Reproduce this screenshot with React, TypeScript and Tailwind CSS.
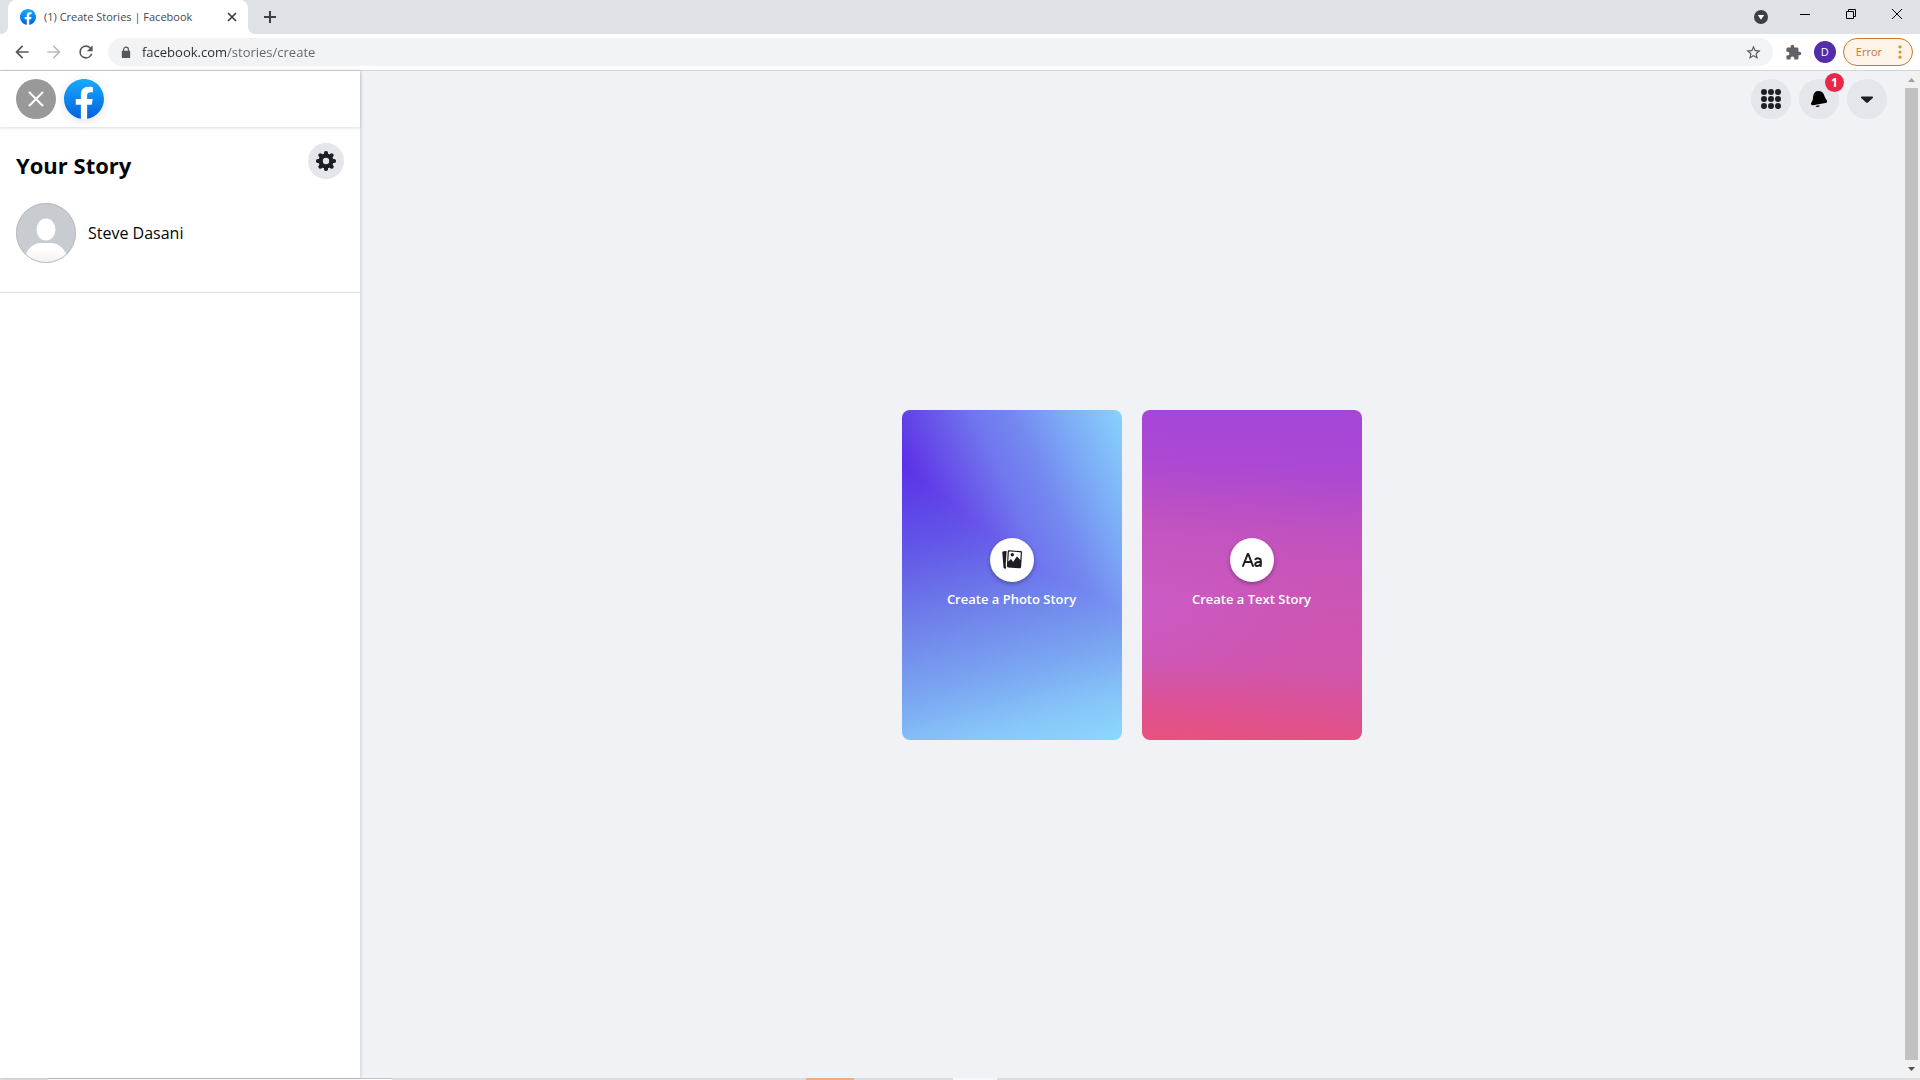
import type { ReactNode } from "react";

function FacebookMark({ id, className }: { id: string; className: string }) {
  return (
    <svg viewBox="0 0 24 24" className={className} aria-hidden="true">
      <defs>
        <linearGradient id={id} x1="0" y1="0" x2="0" y2="1">
          <stop offset="0" stopColor="#1aaafc" />
          <stop offset="1" stopColor="#0062e0" />
        </linearGradient>
      </defs>
      <circle cx="12" cy="12" r="11.5" fill="#fff" />
      <path
        fill={`url(#${id})`}
        d="M24 12c0-6.627-5.373-12-12-12S0 5.373 0 12c0 5.99 4.388 10.954 10.125 11.854v-8.385H7.078v-3.47h3.047V9.357c0-3.007 1.792-4.669 4.533-4.669 1.312 0 2.686.235 2.686.235v2.953H15.83c-1.491 0-1.956.925-1.956 1.874v2.25h3.328l-.532 3.47h-2.796v8.385C19.612 22.954 24 17.99 24 12z"
      />
    </svg>
  );
}

function TabStrip() {
  return (
    <div className="flex h-[34px] shrink-0 items-stretch bg-[#dee1e6]">
      <div className="mt-auto size-2 bg-[radial-gradient(circle_at_0_0,#dee1e6_8px,#fff_8px)]" />
      <div className="flex w-60 items-center rounded-t-lg bg-white pr-2 pl-3">
        <FacebookMark id="tabMark" className="size-4" />
        <span className="ml-2 flex-1 truncate text-[11px] text-[#45494d]">(1) Create Stories | Facebook</span>
        <button aria-label="Close tab" className="grid size-4 place-items-center text-[#3c4043]">
          <svg viewBox="0 0 16 16" className="size-4" stroke="currentColor" strokeWidth="1.7" aria-hidden="true">
            <path d="M4 4l8 8M12 4l-8 8" />
          </svg>
        </button>
      </div>
      <div className="mt-auto size-2 bg-[radial-gradient(circle_at_8px_0,#dee1e6_8px,#fff_8px)]" />
      <button aria-label="New tab" className="grid w-7 place-items-center text-[#3c4043]">
        <svg viewBox="0 0 16 16" className="size-4" stroke="currentColor" strokeWidth="2" aria-hidden="true">
          <path d="M8 2v12M2 8h12" />
        </svg>
      </button>
      <div className="ml-auto flex items-start">
        <button aria-label="Search tabs" className="mt-2.5 mr-3.5 grid size-[14px] place-items-center rounded-full bg-[#3c4043]">
          <svg viewBox="0 0 14 14" className="size-[14px]" aria-hidden="true">
            <path d="M3.8 5h6.4L7 9.8z" fill="#fff" />
          </svg>
        </button>
        <button aria-label="Minimize" className="grid h-7 w-[46px] place-items-center">
          <svg viewBox="0 0 12 12" className="size-3" stroke="#000" aria-hidden="true">
            <path d="M1 6.5h10" />
          </svg>
        </button>
        <button aria-label="Restore" className="grid h-7 w-[46px] place-items-center">
          <svg viewBox="0 0 12 12" className="size-3" stroke="#000" fill="none" aria-hidden="true">
            <path d="M1.5 3.5h7v7h-7zM3.5 3.5v-2h7v7h-2" />
          </svg>
        </button>
        <button aria-label="Close window" className="grid h-7 w-[46px] place-items-center">
          <svg viewBox="0 0 12 12" className="size-3" stroke="#000" aria-hidden="true">
            <path d="M1 1l10 10M11 1L1 11" />
          </svg>
        </button>
      </div>
    </div>
  );
}

function NavIcon({ label, children, className }: { label: string; children: ReactNode; className: string }) {
  return (
    <button aria-label={label} className="grid size-8 place-items-center">
      <svg viewBox="0 0 24 24" className={className} fill="currentColor" aria-hidden="true">
        {children}
      </svg>
    </button>
  );
}

function Toolbar() {
  return (
    <div className="flex h-[37px] shrink-0 items-center border-b border-[#d4d5d8] bg-white pr-[7px] pl-1.5">
      <NavIcon label="Back" className="size-5 text-[#55585d]">
        <path d="M20 11H7.83l5.59-5.59L12 4l-8 8 8 8 1.41-1.41L7.83 13H20z" />
      </NavIcon>
      <NavIcon label="Forward" className="size-5 text-[#babcbe]">
        <path d="M12 4l-1.41 1.41L16.17 11H4v2h12.17l-5.58 5.59L12 20l8-8z" />
      </NavIcon>
      <NavIcon label="Reload" className="size-5 text-[#55585d]">
        <path d="M17.65 6.35A7.96 7.96 0 0 0 12 4a8 8 0 1 0 7.73 10h-2.08A6 6 0 1 1 12 6c1.66 0 3.14.69 4.22 1.78L13 11h7V4z" />
      </NavIcon>
      <div className="ml-1.5 flex h-7 flex-1 items-center rounded-full bg-[#f1f3f4] pr-[11px] pl-3">
        <svg viewBox="0 0 12 14" className="h-[13px] w-3" aria-hidden="true">
          <path d="M3.4 6V3.8a2.6 2.6 0 0 1 5.2 0V6" fill="none" stroke="#55585d" strokeWidth="1.3" />
          <rect x="1.5" y="5" width="9" height="8" rx="1" fill="#55585d" />
        </svg>
        <input
          aria-label="Address"
          defaultValue="facebook.com/stories/create"
          className="ml-2.5 flex-1 bg-[linear-gradient(90deg,#27292c_85px,#606468_85px)] bg-clip-text text-[13px] leading-5 text-transparent outline-none"
        />
        <button aria-label="Bookmark this tab">
          <svg viewBox="0 0 24 24" className="size-[17px]" fill="#55585d" aria-hidden="true">
            <path d="M22 9.24l-7.19-.62L12 2 9.19 8.63 2 9.24l5.46 4.73L5.82 21 12 17.27 18.18 21l-1.63-7.03zM12 15.4l-3.76 2.27 1-4.28-3.32-2.88 4.38-.38L12 6.1l1.71 4.04 4.38.38-3.32 2.88 1 4.28z" />
          </svg>
        </button>
      </div>
      <button aria-label="Extensions" className="ml-3">
        <svg viewBox="0 0 24 24" className="size-[17px]" fill="#5f6368" aria-hidden="true">
          <path d="M20.5 11H19V7a2 2 0 0 0-2-2h-4V3.5a2.5 2.5 0 0 0-5 0V5H4a2 2 0 0 0-2 2v3.8h1.5a2.7 2.7 0 0 1 0 5.4H2V20a2 2 0 0 0 2 2h3.8v-1.5a2.7 2.7 0 0 1 5.4 0V22H17a2 2 0 0 0 2-2v-4h1.5a2.5 2.5 0 0 0 0-5z" />
        </svg>
      </button>
      <button aria-label="Profile D" className="ml-3 grid size-[22px] place-items-center rounded-full bg-[#512da8] text-[11px] text-white">
        D
      </button>
      <button className="ml-[7px] flex h-7 items-center rounded-full border border-[#c77a2c] bg-[#fdf3e8] pr-2.5 pl-3 text-[11px] text-[#c5782a]">
        <span>Error</span>
        <svg viewBox="0 0 4 16" className="ml-4 h-4 w-1" fill="#d9942b" aria-hidden="true">
          <circle cx="2" cy="2.8" r="1.6" />
          <circle cx="2" cy="8" r="1.6" />
          <circle cx="2" cy="13.2" r="1.6" />
        </svg>
      </button>
    </div>
  );
}

function Sidebar() {
  return (
    <aside className="z-10 w-[360px] shrink-0 bg-white shadow-[1px_0_3px_rgba(0,0,0,0.14)]">
      <div className="flex h-14 items-center gap-2 px-4 shadow-[0_1px_3px_rgba(0,0,0,0.14)]">
        <button aria-label="Close" className="grid size-10 place-items-center rounded-full bg-[#999]">
          <svg viewBox="0 0 20 20" className="size-5" stroke="#fff" strokeWidth="2" strokeLinecap="round" aria-hidden="true">
            <path d="M3.5 3.5l13 13M16.5 3.5l-13 13" />
          </svg>
        </button>
        <a href="#home" aria-label="Facebook" className="rounded-full shadow-[0_2px_10px_rgba(0,0,0,0.12)]">
          <FacebookMark id="homeMark" className="size-10" />
        </a>
      </div>
      <div className="border-b border-[#dddfe2] px-4 pt-4 pb-[29px]">
        <div className="flex h-9 items-start justify-between">
          <h1 className="pt-1.5 text-[22px] leading-8 font-bold text-[#050505]">Your Story</h1>
          <button aria-label="Settings" className="grid size-9 place-items-center rounded-full bg-[#e4e6eb]">
            <svg viewBox="-10 -10 20 20" className="size-5" fill="#1c1e21" aria-hidden="true">
              {[0, 45, 90, 135].map((angle) => (
                <rect key={angle} x="-2" y="-10" width="4" height="20" rx="1.8" transform={`rotate(${angle})`} />
              ))}
              <circle r="7.6" />
              <circle r="3.2" fill="#e4e6eb" />
            </svg>
          </button>
        </div>
        <div className="mt-6 flex items-center gap-3">
          <svg viewBox="0 0 60 60" className="size-[60px]" role="img" aria-label="Steve Dasani">
            <defs>
              <linearGradient id="torso" x1="0" y1="0" x2="0" y2="1">
                <stop offset="0.3" stopColor="#fff" />
                <stop offset="1" stopColor="#f0f1f4" />
              </linearGradient>
              <clipPath id="avatarClip">
                <circle cx="30" cy="30" r="30" />
              </clipPath>
            </defs>
            <g clipPath="url(#avatarClip)">
              <rect width="60" height="60" fill="#c8ccd1" />
              <ellipse cx="30" cy="26.5" rx="9.5" ry="11" fill="#fff" />
              <path d="M9 60V53c3-9 10-13 16-13h10c6 0 13 4 16 13v7z" fill="url(#torso)" />
            </g>
            <circle cx="30" cy="30" r="29.5" fill="none" stroke="#b9bdc3" />
          </svg>
          <span className="text-[16px] font-medium text-[#050505]">Steve Dasani</span>
        </div>
      </div>
    </aside>
  );
}

function StoryCard({ label, className, children }: { label: string; className: string; children: ReactNode }) {
  return (
    <button className={`flex h-[330px] w-[220px] flex-col items-center justify-center gap-2 rounded-lg pb-1 ${className}`}>
      <span className="grid size-11 place-items-center rounded-full bg-white shadow-[0_2px_4px_rgba(0,0,0,0.3)]">{children}</span>
      <span className="text-[13px] leading-[18px] font-semibold text-white">{label}</span>
    </button>
  );
}

function AccountBar() {
  return (
    <div className="flex justify-end gap-2 px-[18px] pt-2">
      <button aria-label="Menu" className="grid size-10 place-items-center rounded-full bg-[#e4e6eb]">
        <svg viewBox="0 0 20 20" className="size-5" fill="#1c1e21" aria-hidden="true">
          {[3, 10, 17].map((y) => [3, 10, 17].map((x) => <circle key={`${x}-${y}`} cx={x} cy={y} r="3" />))}
        </svg>
      </button>
      <button aria-label="Notifications, 1 unread" className="relative grid size-10 place-items-center rounded-full bg-[#e4e6eb]">
        <svg viewBox="0 0 20 20" className="size-5" aria-hidden="true">
          <path
            d="M4.2 7C4.6 4 6.3 2 9.2 2c2.9-.1 5 1.3 5.9 4 .6 1.9 1 3 2 4.2.8 1 1.2 1.9.9 2.7-.3.7-.9.9-1.7 1L4 16.2c-1 .2-1.700-.2-1.900-1-.2-.8.3-1.700.9-2.600C4 11 3.900 9.200 4.200 7z"
            fill="#000"
          />
          <path d="M6.4 16.9l4.200-.7c-.1.900-.7 1.600-1.700 1.800-1.100.2-2-.2-2.500-1.100z" fill="#000" />
        </svg>
        <span className="absolute -top-1.5 -right-[5px] grid size-[19px] place-items-center rounded-full bg-[#e92748] text-[12px] font-bold text-white">
          1
        </span>
      </button>
      <button aria-label="Account" className="grid size-10 place-items-center rounded-full bg-[#e4e6eb]">
        <svg viewBox="0 0 20 20" className="size-5" aria-hidden="true">
          <path d="M4.8 7.5h10.4c.8 0 1.1.8.6 1.4l-4.9 4.6c-.5.5-1.3.5-1.8 0L4.2 8.9c-.5-.6-.2-1.4.6-1.4z" fill="#1c1e21" />
        </svg>
      </button>
    </div>
  );
}

function ScrollRail() {
  return (
    <div className="flex w-[15px] shrink-0 flex-col bg-[#f1f1f1] pr-0.5" aria-hidden="true">
      <svg viewBox="0 0 13 17" className="h-[17px]">
        <path d="M3 11l3.5-4L10 11z" fill="#a0a0a0" />
      </svg>
      <div className="flex-1 bg-[#c1c1c1]" />
      <svg viewBox="0 0 13 18" className="h-[18px]">
        <path d="M3 7l3.5 4L10 7z" fill="#505050" />
      </svg>
    </div>
  );
}

export default function App() {
  return (
    <div className="flex h-screen flex-col font-['Open_Sans','Noto_Sans',sans-serif]">
      <TabStrip />
      <Toolbar />
      <div className="flex min-h-0 flex-1 bg-[#f0f2f5]">
        <Sidebar />
        <main className="flex flex-1 flex-col">
          <AccountBar />
          <div className="flex flex-1 items-center justify-center gap-5 pr-0.5 pb-12">
            <StoryCard
              label="Create a Photo Story"
              className="bg-[linear-gradient(66deg,#5a2fe8_112px,#6342e8_135px,#6a5aea_165px,#7078ee_200px,#7488f0_234px,#7aa5f5_270px,#88d2fd_335px),linear-gradient(165deg,#5a2fe8_50px,#6358e8_140px,#6f80ea_210px,#7ba8f2_285px,#86c4f8_330px,#8cd8ff_375px)] bg-blend-lighten"
            >
              <svg viewBox="0 0 20 20" className="size-5" aria-hidden="true">
                <path d="M.3 2.6C.2 1.8.7 1.3 1.5 1.2l2.6-.2c.4 0 .6.2.5.6L3.7 14.8l.4 3.2c.1.4-.1.7-.5.7l-1-.1c-.7-.1-1-.5-1.100-1.200z" fill="#1c1e21" />
                <path
                  fillRule="evenodd"
                  d="M7.3.3l11.300.8c1 .1 1.500.7 1.400 1.600l-.9 14.200c-.1 1-.700 1.500-1.600 1.400l-11.200-.8c-1-.1-1.500-.7-1.400-1.600L5.700 1.700C5.800.7 6.400.200 7.300.3zm.2 1.100c-.4 0-.6.200-.6.600l-.6 9.600 2-1.900c.5-.5.900-.4 1.300.1l1.500 2.200 3.200-4.700c.4-.6 1-.6 1.500-.1l2.500 2.700.5-7.100c0-.4-.2-.6-.6-.6z"
                  fill="#1c1e21"
                />
                <circle cx="10.3" cy="4.7" r="1.7" fill="#1c1e21" />
              </svg>
            </StoryCard>
            <StoryCard
              label="Create a Text Story"
              className="bg-[radial-gradient(ellipse_180px_100px_at_0_60%,rgba(200,95,215,0.5),transparent),linear-gradient(184deg,#a546d9_4%,#ab48d3_18%,#c052c0_36%,#cb55b5_55%,#d055ac_76%,#dd5090_90%,#e8527c_100%)]"
            >
              <svg viewBox="0 0 20 20" className="size-5" fill="none" stroke="#1c1e21" strokeWidth="2" strokeLinecap="round" strokeLinejoin="round" aria-hidden="true">
                <path d="M1 16L5.7 4h.6L11 16M2.9 12h6.3" />
                <path d="M13.5 9.2c1.6-1.3 5.3-1.2 5.3 1.5V16M18.8 12c-2.500-.3-5.600.2-5.600 2.200 0 2.600 4.500 2.300 5.600-.4" />
              </svg>
            </StoryCard>
          </div>
        </main>
        <ScrollRail />
      </div>
      <div className="flex h-0.5 shrink-0 bg-[#dcdee0]" aria-hidden="true">
        <div className="ml-12 w-[344px] border-t border-[#c0c0c0] bg-white" />
        <div className="ml-[414px] w-12 bg-[#f2ab7a]" />
        <div className="ml-[99px] w-11 bg-[#f8f8f8]" />
      </div>
    </div>
  );
}
